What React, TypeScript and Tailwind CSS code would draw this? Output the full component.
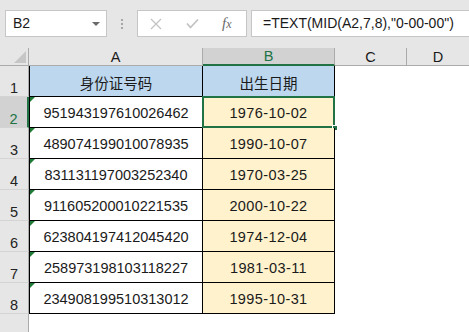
import React from 'react';

const rows = [
  { id: '951943197610026462', date: '1976-10-02' },
  { id: '489074199010078935', date: '1990-10-07' },
  { id: '831131197003252340', date: '1970-03-25' },
  { id: '911605200010221535', date: '2000-10-22' },
  { id: '623804197412045420', date: '1974-12-04' },
  { id: '258973198103118227', date: '1981-03-11' },
  { id: '234908199510313012', date: '1995-10-31' },
];

const latin = "font-['Liberation_Sans','Noto_Sans_CJK_SC',sans-serif]";
const cjk = "font-['Noto_Sans_CJK_SC','Liberation_Sans',sans-serif]";

function RowHeader({ n, active }: { n?: number; active?: boolean }) {
  return (
    <div
      className={`w-[29px] shrink-0 flex items-end justify-center pb-[1px] text-[14.5px] leading-none ${
        active
          ? 'bg-[#d2d2d2] text-[#217346] border-r-2 border-r-[#217346]'
          : 'bg-[#e6e6e6] text-[#222] border-r border-r-[#ababab]'
      } border-b border-b-[#d4d4d4]`}
    >
      {n}
    </div>
  );
}

function TextFlag() {
  return (
    <div className="absolute top-0 left-0 w-0 h-0 border-t-[5px] border-r-[5px] border-t-[#1e7b34] border-r-transparent" />
  );
}

export default function App() {
  return (
    <div className={`w-[469px] h-[332px] overflow-hidden bg-white ${latin} text-[#1a1a1a]`}>
      {/* formula toolbar */}
      <div className="h-[48px] bg-[#e6e6e6] flex items-start pt-[10px] pl-[5px]">
        <div className="w-[102px] h-[27px] bg-white border border-[#c6c6c6] flex items-center justify-between pl-[7px] pr-[6px]">
          <span className="text-[14px]">B2</span>
          <span className="w-0 h-0 border-l-[4px] border-r-[4px] border-t-[4px] border-l-transparent border-r-transparent border-t-[#6a6a6a]" />
        </div>
        <div className="w-[30px] h-[27px] flex flex-col items-center justify-center gap-[2px]">
          <span className="w-[2px] h-[2px] bg-[#a6a6a6]" />
          <span className="w-[2px] h-[2px] bg-[#a6a6a6]" />
          <span className="w-[2px] h-[2px] bg-[#a6a6a6]" />
        </div>
        <div className="w-[110px] h-[27px] bg-white border border-[#c6c6c6] flex items-center pl-[12px]">
          <svg width="12" height="12" viewBox="0 0 12 12" className="mr-[24px]">
            <path d="M1 1 L11 11 M11 1 L1 11" stroke="#c3c3c3" strokeWidth="1.3" fill="none" />
          </svg>
          <svg width="13" height="11" viewBox="0 0 13 11" className="mr-[23px]">
            <path d="M1 5.5 L4.5 9.5 L12 1.5" stroke="#c3c3c3" strokeWidth="1.8" fill="none" />
          </svg>
          <span className="font-['Liberation_Serif',serif] italic text-[15px] text-[#6a6a6a] leading-none">
            f<span className="text-[12px]">x</span>
          </span>
        </div>
        <div className="ml-[4px] flex-1 h-[27px] bg-white border border-r-0 border-[#c6c6c6] flex items-center pl-[11px] text-[14px] whitespace-nowrap">
          =TEXT(MID(A2,7,8),"0-00-00")
        </div>
      </div>

      {/* column headers */}
      <div className="flex h-[18px] bg-[#e6e6e6] text-[14.5px] leading-none">
        <div className="w-[29px] shrink-0 relative border-r border-[#ababab] border-b border-b-[#ababab]">
          <svg width="12" height="12" viewBox="0 0 12 12" className="absolute right-[2px] bottom-[2px]">
            <path d="M12 0 L12 12 L0 12 Z" fill="#c6c6c6" />
          </svg>
        </div>
        <div className="w-[174px] shrink-0 flex items-end justify-center pb-[1px] border-r border-[#ababab] border-b border-b-[#ababab]">A</div>
        <div className="w-[132px] shrink-0 flex items-end justify-center pb-[1px] bg-[#d2d2d2] text-[#217346] border-r border-[#ababab] border-b-2 border-b-[#217346]">B</div>
        <div className="w-[72px] shrink-0 flex items-end justify-center pb-[1px] border-r border-[#ababab] border-b border-b-[#ababab]">C</div>
        <div className="flex-1 flex items-end justify-center pb-[1px] border-b border-b-[#ababab]">D</div>
      </div>

      {/* row 1: headers */}
      <div className="flex h-[31px]">
        <RowHeader n={1} />
        <div className={`w-[174px] shrink-0 bg-[#bdd7ee] border-l border-black border-r border-b flex items-center justify-center pt-[3px] text-[14.5px] ${cjk}`}>
          身份证号码
        </div>
        <div className={`w-[132px] shrink-0 bg-[#bdd7ee] border-r border-b border-black flex items-center justify-center pt-[3px] text-[14.5px] ${cjk}`}>
          出生日期
        </div>
        <div className="flex-1" />
      </div>

      {rows.map((r, i) => {
        const active = i === 0;
        return (
          <div key={r.id} className="flex h-[31px]">
            <RowHeader n={i + 2} active={active} />
            <div className="relative w-[174px] shrink-0 border-l border-black border-r border-b flex items-center justify-center pt-[3px] text-[14.5px]">
              <TextFlag />
              {r.id}
            </div>
            <div className="relative w-[132px] shrink-0 bg-[#fff2cc] border-r border-b border-black flex items-center justify-center pt-[3px] text-[14.5px] tracking-[0.4px]">
              {r.date}
              {active && (
                <>
                  <div className="absolute -left-[1px] -top-[1px] -right-[1px] -bottom-[1px] border-2 border-[#217346]" />
                  <div className="absolute -right-[4px] -bottom-[4px] w-[6px] h-[6px] bg-[#217346] border border-white" />
                </>
              )}
            </div>
            <div className="flex-1" />
          </div>
        );
      })}

      {/* row 9 */}
      <div className="flex h-[31px]">
        <div className="w-[29px] shrink-0 bg-[#e6e6e6] border-r border-r-[#ababab]" />
        <div className="flex-1" />
      </div>
    </div>
  );
}
